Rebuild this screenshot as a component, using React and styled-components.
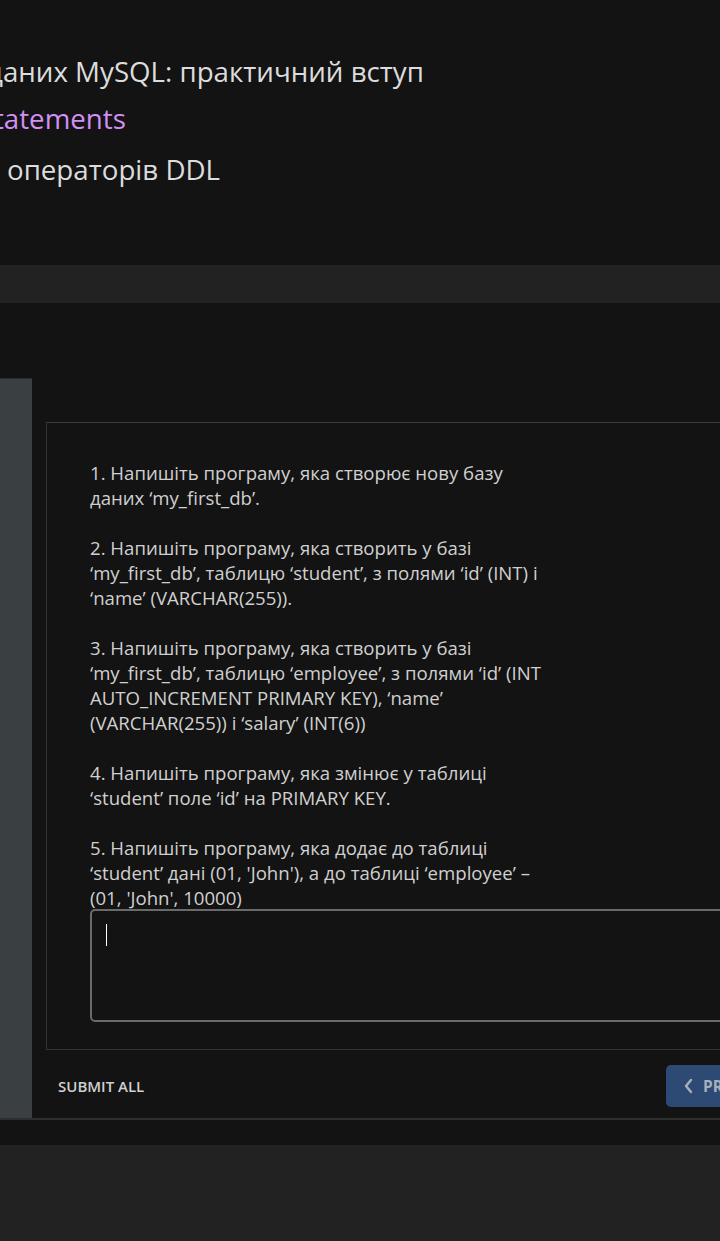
import React from 'react'
import styled, { createGlobalStyle } from 'styled-components'

const Global = createGlobalStyle`
  html, body {
    margin: 0;
    padding: 0;
    background: #131313;
    overflow: hidden;
  }
  body {
    font-family: "Open Sans", "Noto Sans", sans-serif;
    color: #d2d2d2;
  }
`

const Page = styled.div`
  width: 720px;
  min-height: 1241px;
  overflow: hidden;
  display: flex;
  flex-direction: column;
  background: #131313;
`

const Header = styled.header`
  padding: 48px 0 0 0;
  height: 265px;
  box-sizing: border-box;
  overflow: hidden;
`

/* the page is scrolled sideways: titles start left of the viewport */
const TitleLine = styled.div`
  font-size: 27.7px;
  line-height: 47px;
  white-space: pre;
  color: ${p => (p.link ? '#d28ff4' : '#dcdcdc')};
  margin-top: ${p => p.gap || 0}px;
  margin-left: ${p => p.shift || 0}px;
`

const NavBand = styled.div`
  height: 38px;
  background: #222222;
`

const Main = styled.main`
  display: flex;
  margin-top: 75px;
  border-bottom: 2px solid #2e2e2e;
`

const Sidebar = styled.aside`
  width: 32px;
  flex: none;
  background: #3a4041;
  border-top: 1px solid #2a2e2f;
`

const Content = styled.section`
  flex: 1;
  min-width: 0;
  padding: 44px 0 0 14px;
`

const ProblemBox = styled.div`
  width: 820px;
  box-sizing: border-box;
  border: 1px solid #333333;
  border-top-color: #3a3a3a;
  padding: 37px 0 27px 43px;
`

const Statement = styled.div`
  width: 462px;
  font-size: 18.6px;
  line-height: 25px;
  color: #d0d0d0;
`

const Para = styled.p`
  margin: 0 0 25px 0;
  &:last-child {
    margin-bottom: 0;
  }
`

const Editor = styled.div`
  margin-top: -1px;
  height: 113px;
  box-sizing: border-box;
  border: 2px solid #6a6a6a;
  border-radius: 5px;
  background: #131313;
  padding: 13px 14px;
`

const Caret = styled.span`
  display: block;
  width: 1px;
  height: 22px;
  background: #ffffff;
`

const Footer = styled.div`
  display: grid;
  grid-template-columns: 620px auto;
  align-items: center;
  padding: 15px 0 11px 0;
`

const SubmitAll = styled.span`
  padding-left: 12px;
  font-size: 15px;
  font-weight: 600;
  color: #d0d0d0;
  text-transform: uppercase;
`

const NavButton = styled.button`
  display: flex;
  align-items: center;
  gap: 9px;
  height: 42px;
  width: max-content;
  padding: 0 16px 0 17px;
  border: none;
  border-radius: 5px;
  background: #2c4a74;
  color: #a8b0bc;
  font-family: "Open Sans", sans-serif;
  font-size: 15.4px;
  font-weight: 700;
  text-transform: uppercase;
`

const BottomGap = styled.div`
  height: 25px;
`

const PageFooter = styled.footer`
  flex: 1;
  background: #222222;
`

function Chevron() {
  return (
    <svg width="11" height="16" viewBox="0 0 11 16" fill="none">
      <path d="M8 2 L3 8 L8 14" stroke="#a8b0bc" strokeWidth="2.4" strokeLinecap="round" strokeLinejoin="round" />
    </svg>
  )
}

const tasks = [
  '1. Напишіть програму, яка створює нову базу даних ‘my_first_db’.',
  '2. Напишіть програму, яка створить у базі ‘my_first_db’, таблицю ‘student’, з полями ‘id’ (INT) і ‘name’ (VARCHAR(255)).',
  '3. Напишіть програму, яка створить у базі ‘my_first_db’, таблицю ‘employee’, з полями ‘id’ (INT AUTO_INCREMENT PRIMARY KEY), ‘name’ (VARCHAR(255)) і ‘salary’ (INT(6))',
  '4. Напишіть програму, яка змінює у таблиці ‘student’ поле ‘id’ на PRIMARY KEY.',
  "5. Напишіть програму, яка додає до таблиці ‘student’ дані (01, 'John'), а до таблиці ‘employee’ – (01, 'John', 10000)",
]

export default function App() {
  return (
    <Page>
      <Global />
      <Header>
        <TitleLine shift={-13}>даних MySQL: практичний вступ</TitleLine>
        <TitleLine link shift={-6}>tatements</TitleLine>
        <TitleLine gap={4} shift={7}>операторів DDL</TitleLine>
      </Header>
      <NavBand />
      <Main>
        <Sidebar />
        <Content>
          <ProblemBox>
            <Statement>
              {tasks.map(t => (
                <Para key={t}>{t}</Para>
              ))}
            </Statement>
            <Editor>
              <Caret />
            </Editor>
          </ProblemBox>
          <Footer>
            <SubmitAll>Submit all</SubmitAll>
            <NavButton>
              <Chevron />
              Previous
            </NavButton>
          </Footer>
        </Content>
      </Main>
      <BottomGap />
      <PageFooter />
    </Page>
  )
}
